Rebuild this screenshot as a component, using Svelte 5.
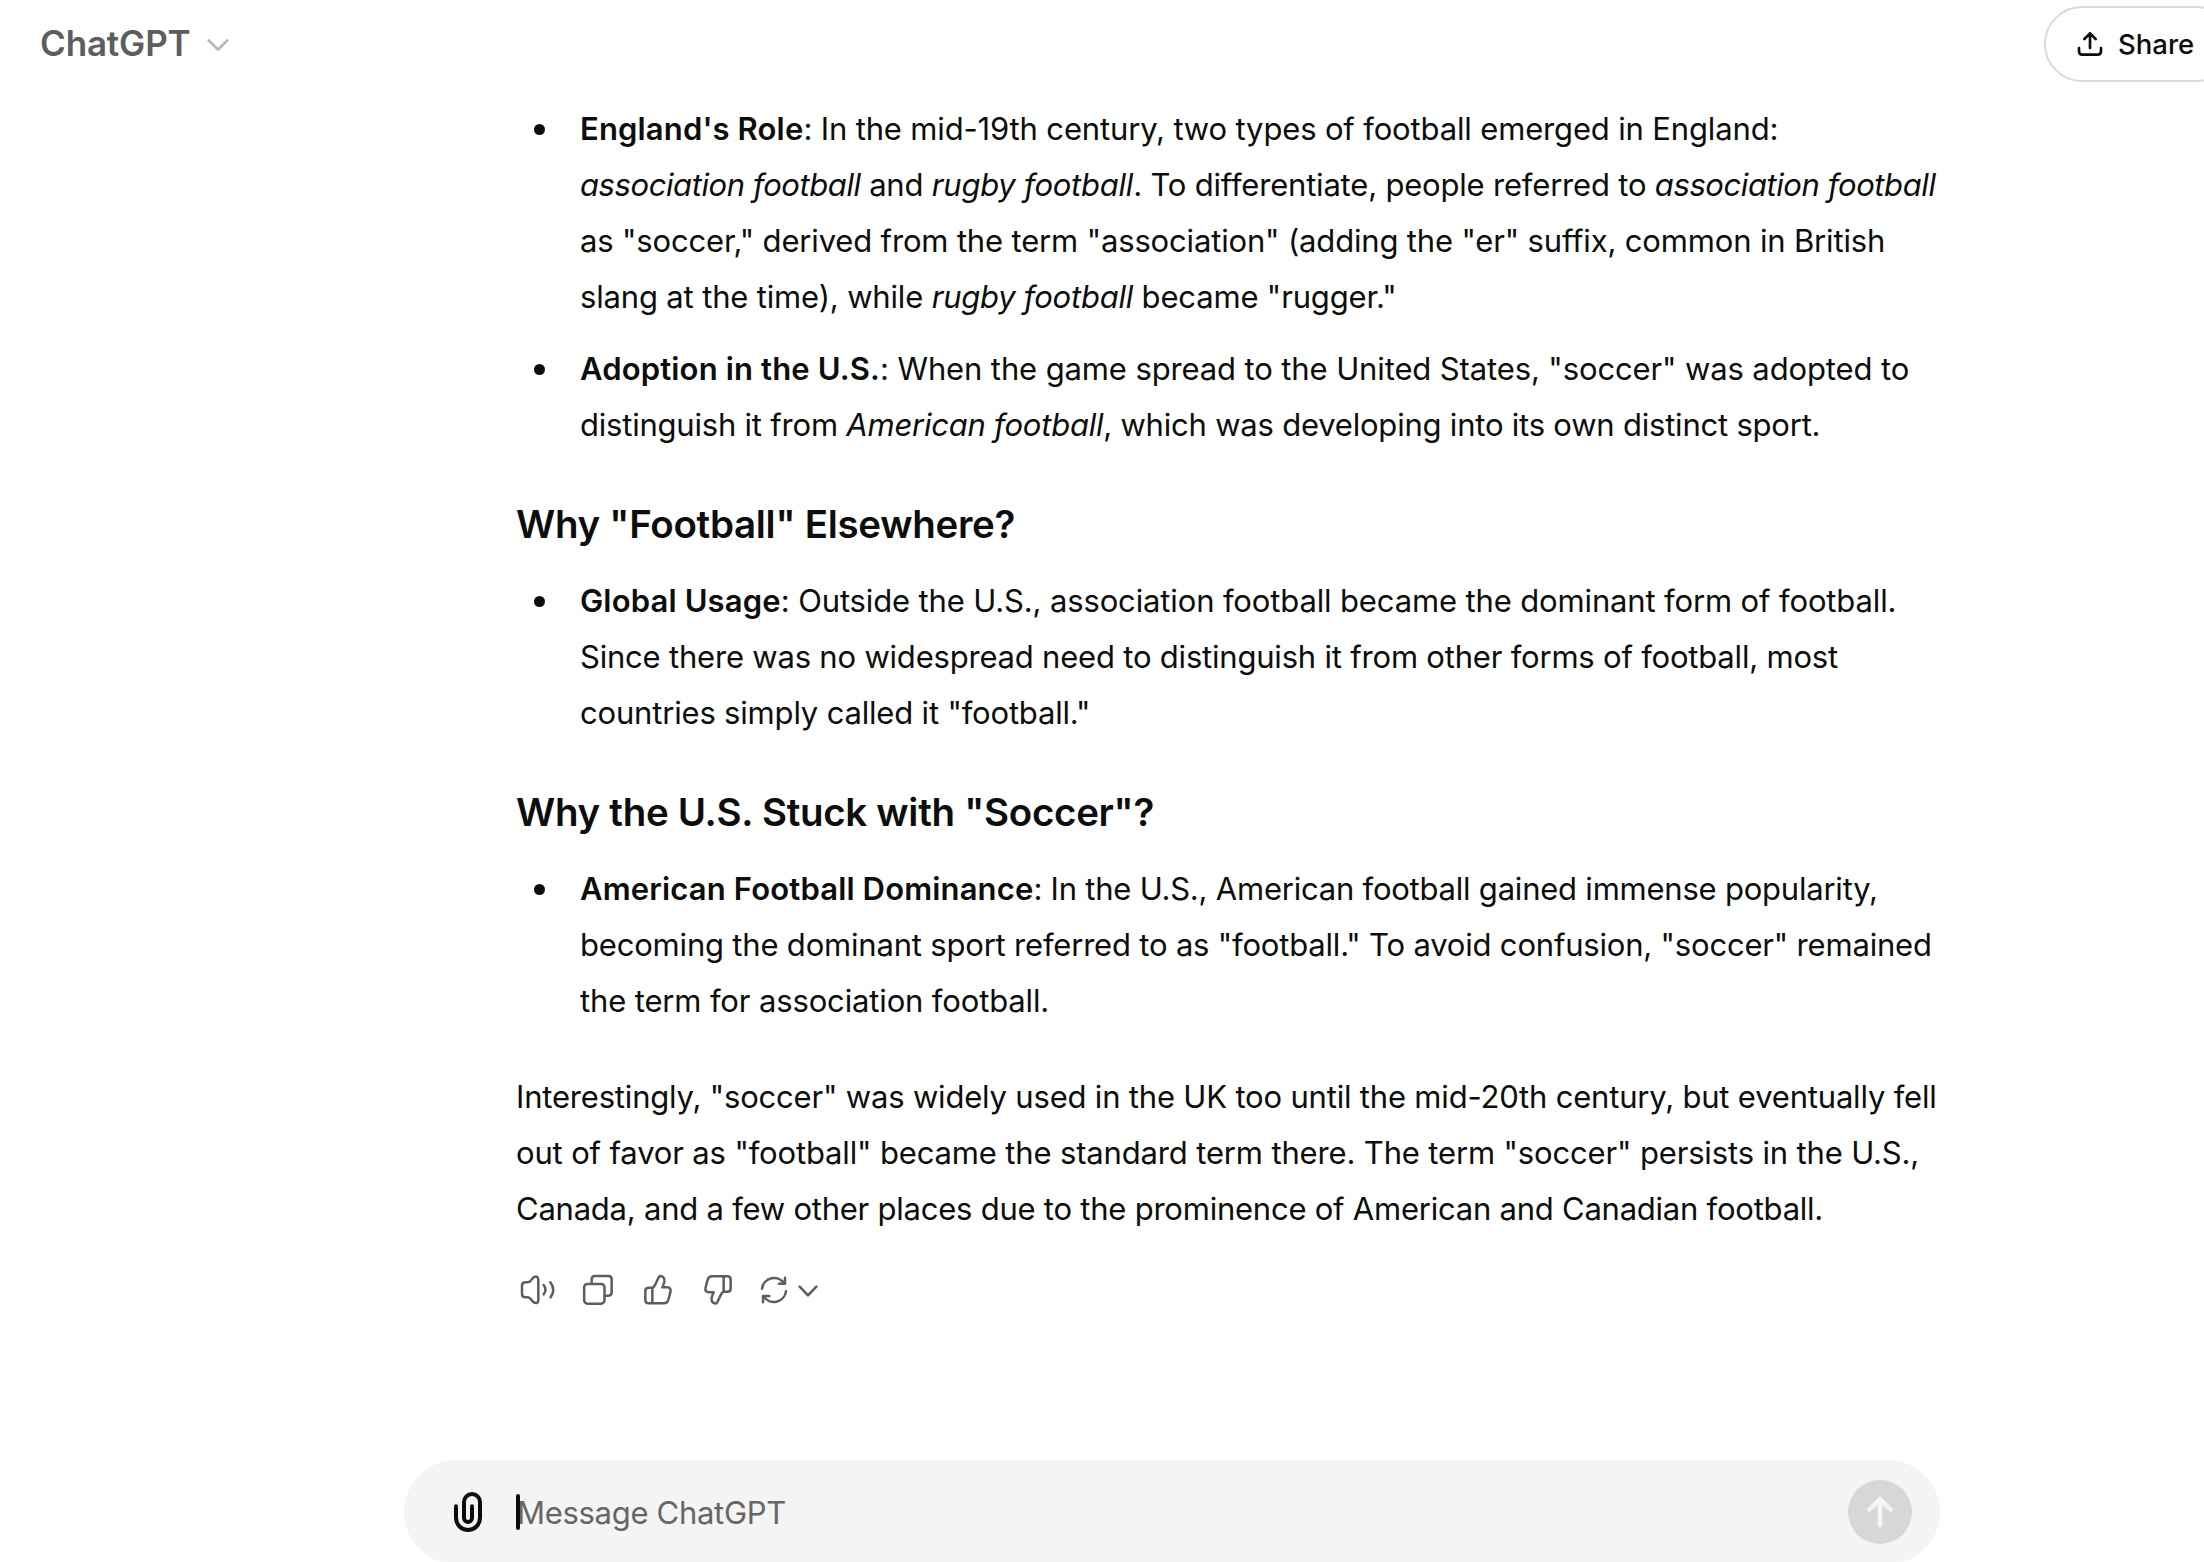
<script>
  // Each line is a list of runs: [text, style]; `track` fine-tunes the letter spacing of its regular text.
  const sections = [
    {
      items: [
        [
          { track: -0.15, runs: [["England's Role", 'bold'], [': In the mid-19th century, two types of football emerged in England:']] },
          { track: -0.19, runs: [['association football', 'italic tight'], [' and '], ['rugby football', 'italic'], ['. To differentiate, people referred to '], ['association football', 'italic tight']] },
          { track: -0.16, runs: [['as "soccer," derived from the term "association" (adding the "er" suffix, common in British']] },
          { track: -0.16, runs: [['slang at the time), while '], ['rugby football', 'italic'], [' became "rugger."']] }
        ],
        [
          { track: -0.12, runs: [['Adoption in the U.S.', 'bold'], [': When the game spread to the United States, "soccer" was adopted to']] },
          { track: -0.21, runs: [['distinguish it from '], ['American football', 'italic'], [', which was developing into its own distinct sport.']] }
        ]
      ]
    },
    {
      title: 'Why "Football" Elsewhere?',
      items: [
        [
          { track: -0.135, runs: [['Global Usage', 'bold'], [': Outside the U.S., association football became the dominant form of football.']] },
          { track: -0.2, runs: [['Since there was no widespread need to distinguish it from other forms of football, most']] },
          { track: -0.18, runs: [['countries simply called it "football."']] }
        ]
      ]
    },
    {
      title: 'Why the U.S. Stuck with "Soccer"?',
      items: [
        [
          { track: -0.22, runs: [['American Football Dominance', 'bold'], [': In the U.S., American football gained immense popularity,']] },
          { track: -0.19, runs: [['becoming the dominant sport referred to as "football." To avoid confusion, "soccer" remained']] },
          { track: -0.14, runs: [['the term for association football.']] }
        ]
      ]
    }
  ];
  const closing = [
    { track: -0.185, runs: [['Interestingly, "soccer" was widely used in the UK too until the mid-20th century, but eventually fell']] },
    { track: -0.15, runs: [['out of favor as "football" became the standard term there. The term "soccer" persists in the U.S.,']] },
    { track: -0.23, runs: [['Canada, and a few other places due to the prominence of American and Canadian football.']] }
  ];
</script>

{#snippet textLine(line)}
  <span class="line" style:letter-spacing="{line.track}px">{#each line.runs as [text, kind]}<span class={kind ?? 'plain'}>{text}</span>{/each}</span>
{/snippet}

{#snippet thumb()}
  <path d="M457 113H446Q436 113 436 123V150Q436 160 446 160H491Q502 160 505 150L511 127Q515 112 501 112H487Q490 106 493 96Q496 80 481 78Q478 78 476 82L467 101Q462 113 455 113M457 113V160" />
{/snippet}

<div class="page">
  <header>
    <button class="model">
      <span>ChatGPT</span>
      <svg class="model-chevron" viewBox="618 102 72 66"><path d="M626 124L654 152L682 124" /></svg>
    </button>
    <button class="share">
      <svg viewBox="216 90 84 84"><path d="M225 144V154Q225 164 235 164H281Q291 164 291 154V144M258 144V100M241 117L258 100L275 117" /></svg>
      <span>Share</span>
    </button>
  </header>

  <main>
    {#each sections as section}
      {#if section.title}<h3>{section.title}</h3>{/if}
      <ul>
        {#each section.items as item}
          <li>
            <i class="dot"></i>
            <div>
              {#each item as line}{@render textLine(line)}{/each}
            </div>
          </li>
        {/each}
      </ul>
    {/each}
    <p>{#each closing as line}{@render textLine(line)}{/each}</p>

    <div class="actions">
      <button aria-label="Read aloud">
        <svg viewBox="61 66 108 108"><path d="M78 97H84Q89 97 92 93L100 84Q106 78 111 80Q116 82 116 89V150Q116 157 111 159Q106 160 100 155L92 146Q88 142 84 142H77Q67 142 67 132V107Q67 97 78 97ZM132 105Q143 119 132 133M152 97Q169 119 153 142" /></svg>
      </button>
      <button aria-label="Copy">
        <svg viewBox="240 66 108 108"><rect x="252.5" y="102" width="61" height="59" rx="10" /><path d="M275 101V88Q275 78 285 78H325Q335 78 335 88V127Q335 137 325 137H314" /></svg>
      </button>
      <button aria-label="Good response">
        <svg viewBox="420 66 108 108">{@render thumb()}</svg>
      </button>
      <button aria-label="Bad response">
        <svg viewBox="600 66 108 108"><g transform="rotate(180 564 119.3)">{@render thumb()}</g></svg>
      </button>
      <button class="retry" aria-label="Regenerate">
        <svg viewBox="774 66 186 108"><path d="M786 116A36.5 36.5 0 0 1 853 101M855 83V101H837M858 124A36.5 36.5 0 0 1 791 139M789 157V138H808M899 110L924 136L949 110" /></svg>
      </button>
    </div>
  </main>

  <footer>
    <svg class="clip" viewBox="162 143 144 144"><path d="M198 198V233A36 36 0 0 0 270 233V185A24 24 0 0 0 222 185V233A12 12 0 0 0 246 233V198" /></svg>
    <div class="input">Message ChatGPT<i class="caret"></i></div>
    <button class="send" aria-label="Send">
      <svg viewBox="204 120 192 192"><path d="M300 255V178M268 209L300 177L332 209" /></svg>
    </button>
  </footer>
</div>

<style>
  :global(body) { background: #fff; overflow: hidden; }
  .page {
    height: 1562px;
    overflow: hidden;
    display: flex;
    flex-direction: column;
    font-family: Inter, "Liberation Sans", sans-serif;
    font-size: 31px;
    line-height: 56px;
    color: #0d0d0d;
  }
  button { border: 0; padding: 0; background: none; font: inherit; color: inherit; display: flex; align-items: center; }
  svg { display: block; flex: none; fill: none; stroke: currentColor; stroke-linecap: round; stroke-linejoin: round; }

  header { height: 88px; flex: none; display: flex; align-items: center; justify-content: space-between; padding-left: 40px; }
  .model { gap: 15px; padding-bottom: 2px; font-size: 35px; font-weight: 600; letter-spacing: -0.15px; color: #5d5d5d; }
  .model-chevron { width: 24px; height: 22px; margin-top: 2px; stroke: #b4b4b4; stroke-width: 8; }
  .share {
    box-sizing: border-box;
    width: 190px;
    height: 76px;
    margin-right: -30px;
    padding-left: 30px;
    gap: 14px;
    border: 2px solid #d9d9d9;
    border-radius: 38px;
    font-size: 27.5px;
    font-weight: 500;
  }
  .share svg { width: 28px; height: 28px; stroke-width: 8; }

  main { flex: none; width: 1424px; margin-left: 516px; padding-top: 13px; }
  ul { list-style: none; margin: 0; padding: 0; display: flex; flex-direction: column; gap: 16px; }
  li { display: grid; grid-template-columns: 64px 1fr; }
  .dot { width: 11px; height: 11px; margin: 23px 0 0 18px; border-radius: 50%; background: #0d0d0d; }
  .line { display: block; white-space: pre; }
  .bold { font-weight: 600; letter-spacing: 0.15px; }
  .italic { font-style: italic; letter-spacing: -0.24px; }
  .tight { letter-spacing: -0.42px; }
  h3 { margin: 39px 0 17px; font-size: 38.5px; line-height: 64px; font-weight: 600; letter-spacing: -0.3px; }
  p { margin: 40px 0 0; }

  .actions { display: flex; height: 60px; margin: 23px 0 0 -8px; color: #5d5d5d; }
  .actions button { width: 60px; height: 60px; justify-content: center; }
  .actions svg { width: 36px; height: 36px; stroke-width: 7.5; }
  .actions .retry { width: 72px; justify-content: flex-start; padding-left: 10px; }
  .actions .retry svg { width: 62px; }

  footer {
    box-sizing: border-box;
    flex: none;
    width: 1536px;
    height: 104px;
    margin: 140px 0 0 404px;
    padding: 0 28px 0 40px;
    display: flex;
    align-items: center;
    border-radius: 52px;
    background: #f4f4f4;
  }
  .clip { width: 48px; height: 48px; stroke-width: 12; }
  .input { position: relative; flex: 1; margin-left: 25px; padding-top: 2px; color: #666; letter-spacing: -0.3px; }
  .caret { position: absolute; left: -1px; top: 11px; width: 4px; height: 36px; border-radius: 2px; background: #0d0d0d; }
  .send { width: 64px; height: 64px; border-radius: 50%; background: #d7d7d7; color: #f4f4f4; }
  .send svg { width: 64px; height: 64px; stroke-width: 13.5; }
</style>
